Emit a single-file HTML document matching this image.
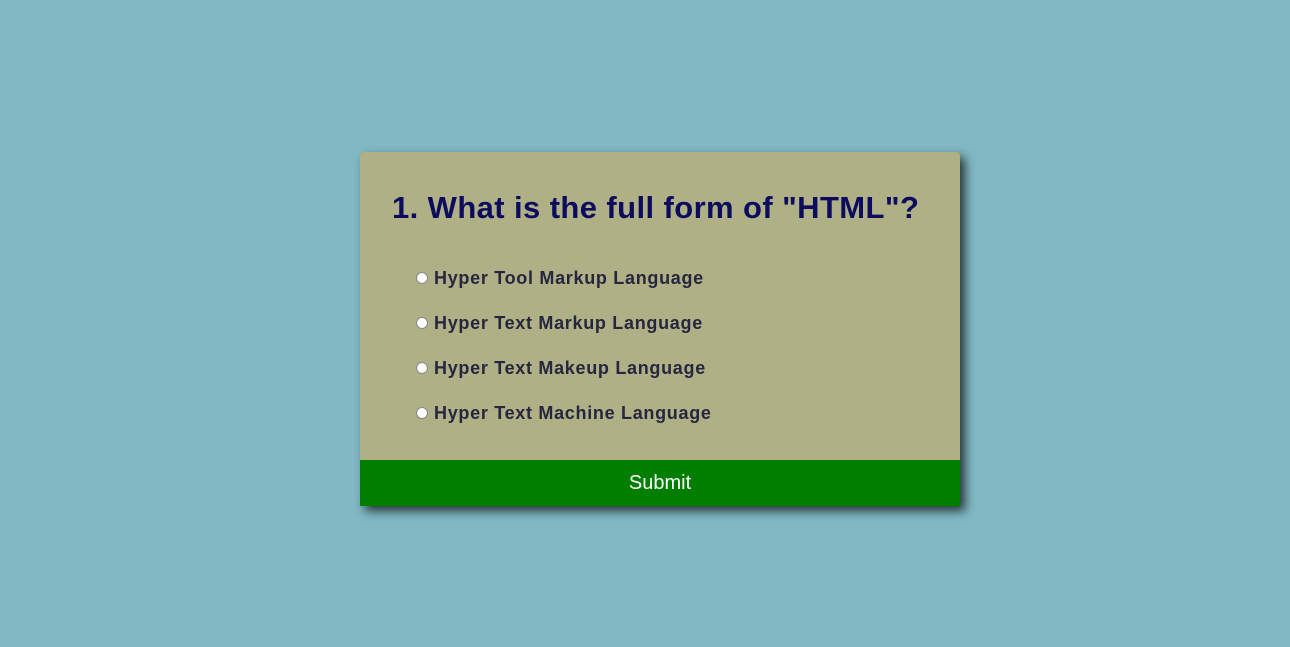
<!DOCTYPE html>
<html><head><style>
html,body{margin:0;padding:0}
body{width:1290px;height:647px;background:#81b8c3;position:relative;overflow:hidden;font-family:"Liberation Sans",sans-serif}
.card{position:absolute;left:360px;top:152px;width:600px;height:354px;background:#afb085;border-radius:4px 4px 0 0;box-shadow:5px 5px 10px rgba(0,0,0,.7);overflow:hidden}
h1{position:absolute;left:32px;top:38px;margin:0;font-size:31px;font-weight:bold;color:#0c0b5e;white-space:nowrap;letter-spacing:0.4px}
.opt{position:absolute;left:56px;font-size:18px;font-weight:bold;color:#26263e;white-space:nowrap;letter-spacing:0.7px}
.opt i{display:inline-block;width:12px;height:12px;border-radius:50%;background:#fff;border:1px solid #888;box-sizing:border-box;margin-right:6px;vertical-align:0px}
.btn{position:absolute;left:0;top:308px;width:600px;height:46px;background:#007e00;color:#fff;font-size:20px;text-align:center;line-height:46px}
</style></head><body>
<div class="card">
<h1>1. What is the full form of "HTML"?</h1>
<div class="opt" style="top:116px"><i></i>Hyper Tool Markup Language</div>
<div class="opt" style="top:161px"><i></i>Hyper Text Markup Language</div>
<div class="opt" style="top:206px"><i></i>Hyper Text Makeup Language</div>
<div class="opt" style="top:251px"><i></i>Hyper Text Machine Language</div>
<div class="btn">Submit</div>
</div>
</body></html>
